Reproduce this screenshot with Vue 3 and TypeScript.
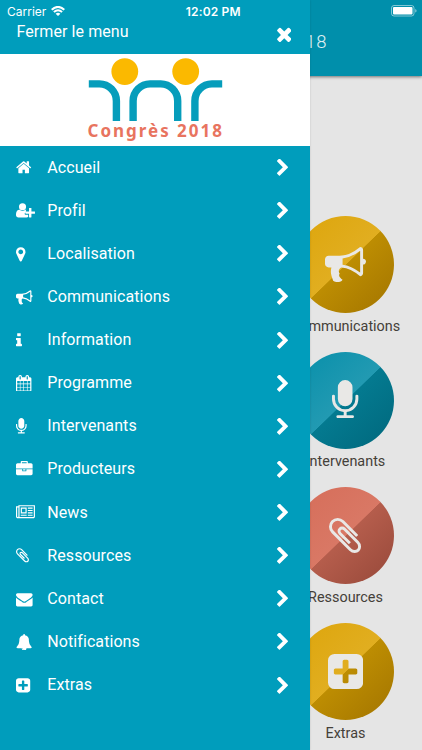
<script setup lang="ts">
interface Glyph {
  x: number
  w: number
  d: string
}

interface Entry {
  label: string
  icon: string
}

interface Tile extends Entry {
  tone: 'gold' | 'teal' | 'coral'
}

const glyphs: Record<string, Glyph> = {
  home: { x: 64, w: 1664, d: 'M1472 992v480q0 26-19 45t-45 19h-384v-384h-256v384h-384q-26 0-45-19t-19-45v-480q0-1 .5-3t.5-3l575-474 575 474q1 2 1 6zm223-69l-62 74q-8 9-21 11h-3q-13 0-21-7l-692-577-692 577q-12 8-24 7-13-2-21-11l-62-74q-8-10-7-23.500t11-21.500l719-599q32-26 76-26t76 26l244 204v-195q0-14 9-23t23-9h192q14 0 23 9t9 23v408l219 182q10 8 11 21.500t-7 23.500z' },
  profile: { x: 0, w: 2048, d: 'M704 896a384 384 0 1 1 0-768a384 384 0 0 1 0 768zM1664 1024h352q13 0 22.500 9.500t9.500 22.500v192q0 13-9.500 22.500t-22.500 9.500h-352v352q0 13-9.500 22.500t-22.500 9.500h-192q-13 0-22.500-9.500t-9.500-22.500v-352h-352q-13 0-22.500-9.500t-9.500-22.500v-192q0-13 9.500-22.500t22.500-9.500h352v-352q0-13 9.500-22.500t22.500-9.500h192q13 0 22.500 9.500t9.500 22.500v352zM928 1248q0 52 38 90t90 38h256v238q-68 50-171 50h-874q-121 0-194-69t-73-190q0-53 3.500-103.500t14-109 26.500-108.500 43-97.500 62-81 85.500-53.500 111.500-20q19 0 39 17 154 122 319 122t319-122q20-17 39-17 28 0 57 6-28 27-41 50t-13 56v192q-45 0-83 38t-38 90z' },
  marker: { x: 384, w: 1024, d: 'M1152 640q0-106-75-181t-181-75-181 75-75 181 75 181 181 75 181-75 75-181zm256 0q0 109-33 179l-364 774q-16 33-47.500 52t-67.500 19-67.500-19-46.500-52l-365-774q-33-70-33-179 0-212 150-362t362-150 362 150 150 362z' },
  bullhorn: { x: 0, w: 1792, d: 'M1664 640q53 0 90.500 37.500t37.500 90.500-37.500 90.500-90.500 37.500v384q0 52-38 90t-90 38q-417-347-812-380-58 19-91 66t-31 100.500 40 92.500q-20 33-23 65.500t6 58 33.500 55 48 50 61.500 50.500q-29 58-111.500 83t-168.500 11.500-132-55.500q-7-23-29.500-87.500t-32-94.500-23-89-15-101 3.500-98.500 22-110.500h-122q-66 0-113-47t-47-113v-192q0-66 47-113t113-47h480q435 0 896-384 52 0 90 38t38 90v384zm-128 604v-954q-394 302-768 343v270q377 42 768 341z' },
  info: { x: 576, w: 640, d: 'M1216 1344v128q0 26-19 45t-45 19h-512q-26 0-45-19t-19-45v-128q0-26 19-45t45-19h64v-384h-64q-26 0-45-19t-19-45v-128q0-26 19-45t45-19h384q26 0 45 19t19 45v576h64q26 0 45 19t19 45zm-128-1152v192q0 26-19 45t-45 19h-256q-26 0-45-19t-19-45v-192q0-26 19-45t45-19h256q26 0 45 19t19 45z' },
  calendar: { x: 64, w: 1664, d: 'M192 1664h288v-288h-288v288zm352 0h320v-288h-320v288zm-352-352h288v-320h-288v320zm352 0h320v-320h-320v320zm-352-384h288v-288h-288v288zm736 736h320v-288h-320v288zm-384-736h320v-288h-320v288zm768 736h288v-288h-288v288zm-384-352h320v-320h-320v320zm-352-864v-288q0-13-9.500-22.500t-22.500-9.500h-64q-13 0-22.500 9.500t-9.500 22.500v288q0 13 9.500 22.500t22.500 9.500h64q13 0 22.500-9.500t9.500-22.500zm736 864h288v-320h-288v320zm-384-384h320v-288h-320v288zm384 0h288v-288h-288v288zm32-480v-288q0-13-9.500-22.500t-22.500-9.500h-64q-13 0-22.500 9.500t-9.500 22.500v288q0 13 9.500 22.500t22.500 9.500h64q13 0 22.500-9.500t9.500-22.500zm384-64v1280q0 52-38 90t-90 38h-1408q-52 0-90-38t-38-90v-1280q0-52 38-90t90-38h128v-96q0-66 47-113t113-47h64q66 0 113 47t47 113v96h384v-96q0-66 47-113t113-47h64q66 0 113 47t47 113v96h128q52 0 90 38t38 90z' },
  microphone: { x: 320, w: 1152, d: 'M1472 704v128q0 221-147.500 384.500t-364.500 187.500v132h256q26 0 45 19t19 45-19 45-45 19h-640q-26 0-45-19t-19-45 19-45 45-19h256v-132q-217-24-364.500-187.500t-147.500-384.500v-128q0-26 19-45t45-19 45 19 19 45v128q0 185 131.500 316.500t316.500 131.500 316.500-131.500 131.500-316.500v-128q0-26 19-45t45-19 45 19 19 45zm-256-384v512q0 132-94 226t-226 94-226-94-94-226v-512q0-132 94-226t226-94 226 94 94 226z' },
  briefcase: { x: 0, w: 1792, d: 'M640 256h512v-128h-512v128zm1152 640v480q0 66-47 113t-113 47h-1472q-66 0-113-47t-47-113v-480h672v160q0 26 19 45t45 19h320q26 0 45-19t19-45v-160h672zm-768 0v128h-256v-128h256zm768-480v384h-1792v-384q0-66 47-113t113-47h352v-160q0-40 28-68t68-28h576q40 0 68 28t28 68v160h352q66 0 113 47t47 113z' },
  news: { x: 0, w: 2048, d: 'M1024 512h-384v384h384v-384zm128 640v128h-640v-128h640zm0-768v640h-640v-640h640zm640 768v128h-512v-128h512zm0-256v128h-512v-128h512zm0-256v128h-512v-128h512zm0-256v128h-512v-128h512zm-1536 960v-960h-128v960q0 26 19 45t45 19 45-19 19-45zm1664 0v-1088h-1536v1088q0 33-11 64h1483q26 0 45-19t19-45zm128-1216v1216q0 80-56 136t-136 56h-1664q-80 0-136-56t-56-136v-1088h256v-128h1792z' },
  paperclip: { x: 196, w: 1400, d: 'M1596 1385q0 117-79 196t-196 79q-135 0-235-100l-777-776q-113-115-113-271 0-159 110-270t269-111q158 0 273 113l605 606q10 10 10 22 0 16-30.500 46.500t-46.500 30.500q-13 0-23-10l-606-607q-79-77-181-77-106 0-179 75t-73 181q0 105 76 181l776 777q63 63 145 63 64 0 106-42t42-106q0-82-63-145l-581-581q-26-24-60-24-29 0-48 19t-19 48q0 32 25 59l410 410q10 10 10 22 0 16-31 47t-47 31q-12 0-22-10l-410-410q-63-61-63-149 0-82 57-139t139-57q88 0 149 63l581 581q100 98 100 235z' },
  envelope: { x: 0, w: 1792, d: 'M1792 710v794q0 66-47 113t-113 47h-1472q-66 0-113-47t-47-113v-794q44 49 101 87 362 246 497 345 57 42 92.500 65.500t94.500 48 110 24.500h2q51 0 110-24.500t94.500-48 92.500-65.500q170-123 498-345 57-39 100-87zm0-294q0 79-49 151t-122 123q-376 261-468 325-10 7-42.500 30.500t-54 38-52 32.500-57.500 27-50 9h-2q-23 0-50-9t-57.500-27-52-32.500-54-38-42.500-30.500q-91-64-262-182.500t-205-142.500q-62-42-117-115.500t-55-136.500q0-78 41.500-130t118.500-52h1472q65 0 112.500 47t47.500 113z' },
  bell: { x: 20, w: 1708, d: 'M912 1696q0-16-16-16-59 0-101.500-42.500t-42.500-101.500q0-16-16-16t-16 16q0 73 51.500 124.500t124.500 51.500q16 0 16-16zm816-288q0 52-38 90t-90 38h-448q0 106-75 181t-181 75-181-75-75-181h-448q-52 0-90-38t-38-90q50-42 91-88t85-119.500 74.500-158.500 50-206 19.500-260q0-152 117-282.500t307-158.500q-8-19-8-39 0-40 28-68t68-28 68 28 28 68q0 20-8 39 190 28 307 158.500t117 282.500q0 139 19.500 260t50 206 74.500 158.500 85 119.500 91 88z' },
  plus: { x: 128, w: 1536, d: 'M1408 960v-128q0-26-19-45t-45-19h-320v-320q0-26-19-45t-45-19h-128q-26 0-45 19t-19 45v320h-320q-26 0-45 19t-19 45v128q0 26 19 45t45 19h320v320q0 26 19 45t45 19h128q26 0 45-19t19-45v-320h320q26 0 45-19t19-45zm256-544v960q0 119-84.500 203.500t-203.500 84.500h-960q-119 0-203.500-84.500t-84.500-203.500v-960q0-119 84.500-203.500t203.500-84.500h960q119 0 203.500 84.500t84.500 203.500z' },
}

const entries: Entry[] = [
  { label: 'Accueil', icon: 'home' },
  { label: 'Profil', icon: 'profile' },
  { label: 'Localisation', icon: 'marker' },
  { label: 'Communications', icon: 'bullhorn' },
  { label: 'Information', icon: 'info' },
  { label: 'Programme', icon: 'calendar' },
  { label: 'Intervenants', icon: 'microphone' },
  { label: 'Producteurs', icon: 'briefcase' },
  { label: 'News', icon: 'news' },
  { label: 'Ressources', icon: 'paperclip' },
  { label: 'Contact', icon: 'envelope' },
  { label: 'Notifications', icon: 'bell' },
  { label: 'Extras', icon: 'plus' },
]

const tiles: Tile[] = [
  { label: 'Communications', icon: 'bullhorn', tone: 'gold' },
  { label: 'Intervenants', icon: 'microphone', tone: 'teal' },
  { label: 'Ressources', icon: 'paperclip', tone: 'coral' },
  { label: 'Extras', icon: 'plus', tone: 'gold' },
]

const box = (name: string) => `${glyphs[name].x} 0 ${glyphs[name].w} 1792`
const widthAt = (name: string, size: number) => (glyphs[name].w / 1792) * size
</script>

<template>
  <div class="screen">
    <main class="page">
      <header class="page-bar"><span class="page-title">18</span></header>
      <section class="tiles">
        <article v-for="t in tiles" :key="t.label" class="tile">
          <div class="disc" :class="t.tone">
            <svg :viewBox="box(t.icon)" :width="widthAt(t.icon, 41)" height="41"><path :d="glyphs[t.icon].d" /></svg>
          </div>
          <span class="tile-label">{{ t.label }}</span>
        </article>
      </section>
    </main>

    <aside class="drawer">
      <header class="drawer-head">
        <span>Fermer le menu</span>
        <svg class="close" viewBox="302 302 1188 1252"><path d="M1490 1322q0 40-28 68l-136 136q-28 28-68 28t-68-28l-294-294-294 294q-28 28-68 28t-68-28l-136-136q-28-28-28-68t28-68l294-294-294-294q-28-28-28-68t28-68l136-136q28-28 68-28t68 28l294 294 294-294q28-28 68-28t68 28l136 136q28 28 28 68t-28 68l-294 294 294 294q28 28 28 68z" /></svg>
      </header>
      <div class="brand">
        <svg viewBox="0 0 310 92" width="310" height="92">
          <g fill="none" stroke="#069dbb" stroke-width="7.400">
            <path d="M88.800 29.900H99.400A17 17 0 0 1 116.400 46.900V67" />
            <path d="M133.100 67V46.900A17 17 0 0 1 150.100 29.900H160.700A17 17 0 0 1 177.700 46.900V67" />
            <path d="M194.900 67V46.900A17 17 0 0 1 211.900 29.900H222.200" />
          </g>
          <circle cx="124.800" cy="17.600" r="13.400" fill="#fbb900" />
          <circle cx="185.700" cy="17.600" r="13.400" fill="#fbb900" />
          <text x="87.500" y="83" textLength="134.500" lengthAdjust="spacing">Congrès 2018</text>
        </svg>
      </div>
      <nav class="menu">
        <a v-for="e in entries" :key="e.label" class="row">
          <span class="row-icon">
            <svg :viewBox="box(e.icon)" :width="widthAt(e.icon, 16.6)" height="16.600"><path :d="glyphs[e.icon].d" /></svg>
          </span>
          <span class="row-label">{{ e.label }}</span>
          <svg class="chevron" viewBox="346 90 1036 1548"><path d="M1363 877l-742 742q-19 19-45 19t-45-19l-166-166q-19-19-19-45t19-45l531-531-531-531q-19-19-19-45t19-45l166-166q19-19 45-19t45 19l742 742q19 19 19 45t-19 45z" /></svg>
        </a>
      </nav>
    </aside>

    <div class="status">
      <div class="carrier">
        <span>Carrier</span>
        <svg viewBox="0 0 14 10" width="14" height="10">
          <g fill="none" stroke="#fff" stroke-width="2">
            <path d="M.7 3.700Q7-1.900 13.300 3.700" />
            <path d="M2.900 6.100Q7 2.400 11.100 6.100" />
          </g>
          <path d="M4.600 7.700Q7 5.700 9.400 7.700L7 10z" />
        </svg>
      </div>
      <span class="clock">12:02 PM</span>
      <svg class="battery" viewBox="0 0 26 12" width="26" height="12">
        <rect x=".5" y=".5" width="22.500" height="10.500" rx="2.500" fill="none" stroke="#fff" stroke-opacity=".5" />
        <rect x="2" y="2" width="19.500" height="7.500" rx="1" />
        <path d="M24.200 4q1.400 .4 1.400 1.800t-1.400 1.800z" fill-opacity=".5" />
      </svg>
    </div>
  </div>
</template>

<style>
body {
  margin: 0;
}
</style>

<style scoped>
.screen {
  position: relative;
  width: 422px;
  height: 750px;
  overflow: hidden;
  background: #e5e5e5;
  font-family: Roboto, sans-serif;
}

svg {
  display: block;
  fill: #fff;
}

.page {
  height: 100%;
}

.page-bar {
  display: flex;
  height: 76px;
  box-sizing: border-box;
  padding: 7px 96px 0 0;
  align-items: center;
  justify-content: flex-end;
  background: #008fab;
  box-shadow: 0 1px 3px rgba(0, 0, 0, 0.5);
}

.page-title {
  color: #e0f2f5;
  font-size: 18.500px;
  font-weight: 300;
  letter-spacing: 0.600px;
  margin-right: -1px;
}

.tiles {
  display: flex;
  flex-direction: column;
  align-items: flex-end;
  padding: 140px 0 0;
}

.tile {
  display: flex;
  width: 153px;
  height: 135.700px;
  flex-direction: column;
  align-items: center;
}

.disc {
  display: flex;
  width: 97px;
  height: 97px;
  flex: none;
  align-items: center;
  justify-content: center;
  border-radius: 50%;
}

.disc svg {
  fill: #e9e8e6;
}

.gold {
  background: linear-gradient(136deg, #dda50b, #e1ae20 50%, #bd8d02 50.500%, #a27400);
}

.teal {
  background: linear-gradient(136deg, #078faa, #229ab2 50%, #047a90 50.500%, #00677c);
}

.coral {
  background: linear-gradient(136deg, #d66d59, #d97865 50%, #b55d4c 50.500%, #964839);
}

.tile-label {
  margin-top: 4.500px;
  color: #444039;
  font-size: 14.400px;
  line-height: 18px;
}

.drawer {
  position: absolute;
  top: 0;
  left: 0;
  width: 310px;
  height: 750px;
  color: #fff;
  background: #009dbc;
  box-shadow: 0 0 2px rgba(0, 0, 0, 0.15);
}

.drawer-head {
  display: flex;
  height: 54px;
  box-sizing: border-box;
  padding: 22px 19px 0 16.500px;
  align-items: flex-start;
  justify-content: space-between;
  font-size: 16px;
  line-height: 20px;
  letter-spacing: 0.080px;
}

.close {
  width: 14.500px;
  height: 15px;
  margin-top: 5px;
}

.brand {
  height: 92px;
  background: #fff;
}

.brand text {
  fill: #e8745f;
  font-family: "Noto Sans", sans-serif;
  font-size: 17px;
  font-weight: 700;
}

.menu {
  display: flex;
  flex-direction: column;
}

.row {
  display: flex;
  height: 43.140px;
  padding: 0 22px 0 16.300px;
  align-items: center;
}

.row-icon {
  width: 31px;
}

.row-label {
  flex: 1;
  font-size: 16px;
  line-height: 20px;
  letter-spacing: 0.080px;
}

.chevron {
  width: 11px;
  height: 17px;
}

.status {
  position: absolute;
  top: 0;
  left: 0;
  display: grid;
  width: 422px;
  height: 22px;
  box-sizing: border-box;
  padding: 0 5.500px 0 7px;
  grid-template-columns: 1fr auto 1fr;
  align-items: center;
  color: #fff;
  font-family: Inter, sans-serif;
  font-size: 12px;
}

.carrier {
  display: flex;
  gap: 5px;
  align-items: center;
}

.clock {
  padding-left: 3px;
  font-weight: 600;
  letter-spacing: 0.150px;
}

.battery {
  justify-self: end;
}
</style>
